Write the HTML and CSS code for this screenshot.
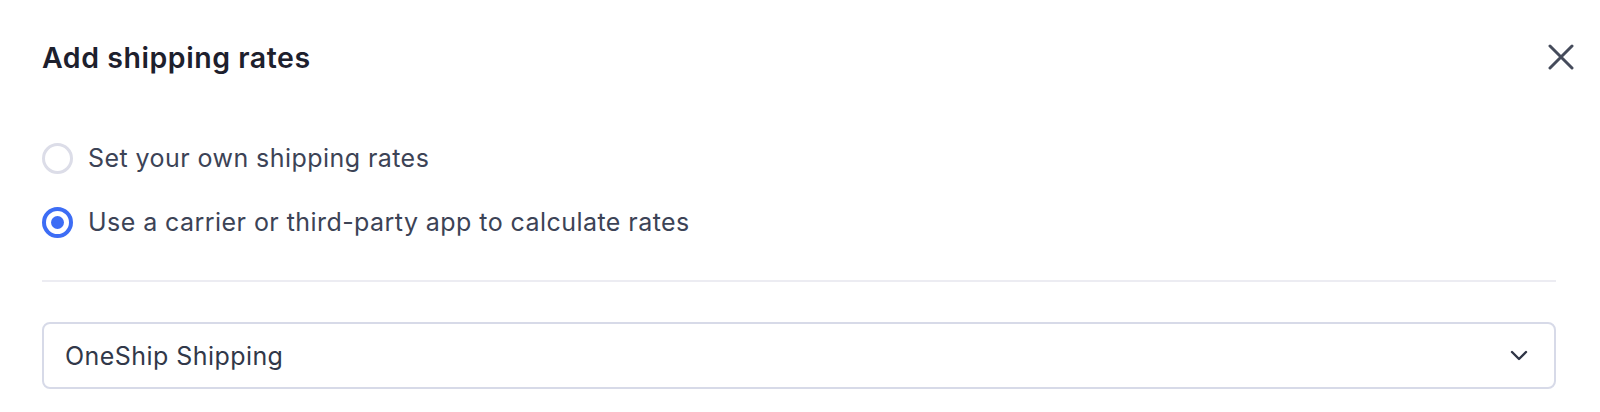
FILE: index.html
```html
<!DOCTYPE html>
<html lang="en">
<head>
<meta charset="utf-8">
<title>Add shipping rates</title>
<link rel="stylesheet" href="styles.css">
</head>
<body>
<div class="modal">
  <div class="modal-header">
    <h2 class="modal-title">Add shipping rates</h2>
    <button class="close-btn" aria-label="Close">
      <svg width="26" height="26" viewBox="0 0 26 26"><path d="M2 2 L24 24 M24 2 L2 24" stroke="#454b5b" stroke-width="3" stroke-linecap="round" fill="none"/></svg>
    </button>
  </div>
  <div class="radio-group">
    <label class="radio-row">
      <span class="radio"></span>
      <span class="radio-label">Set your own shipping rates</span>
    </label>
    <label class="radio-row">
      <span class="radio checked"></span>
      <span class="radio-label">Use a carrier or third-party app to calculate rates</span>
    </label>
  </div>
  <div class="divider"></div>
  <div class="select">
    <span class="select-value">OneShip Shipping</span>
    <svg class="chevron" width="18" height="11" viewBox="0 0 18 11"><path d="M2 2 L9 9 L16 2" stroke="#2f3546" stroke-width="2.4" stroke-linecap="round" stroke-linejoin="round" fill="none"/></svg>
  </div>
</div>
</body>
</html>
```

FILE: styles.css
```css
* { box-sizing: border-box; }
html, body { margin: 0; padding: 0; background: #ffffff; }
body { font-family: Inter, "Noto Sans", "Liberation Sans", sans-serif; }

.modal {
  width: 1600px;
  height: 412px;
  padding: 40px 44px 0 42px;
  background: #ffffff;
}

.modal-header {
  display: flex;
  align-items: center;
  justify-content: space-between;
  height: 34px;
}

.modal-title {
  margin: 0;
  font-size: 28.5px;
  font-weight: 600;
  color: #1d202d;
  letter-spacing: 0.55px;
}

.close-btn {
  border: 0;
  background: none;
  padding: 0;
  margin-right: -18px;
  width: 26px;
  height: 26px;
  display: flex;
  align-items: center;
  justify-content: center;
  cursor: pointer;
}

.radio-group {
  display: flex;
  flex-direction: column;
  gap: 32px;
  margin-top: 68px;
}

.radio-row {
  display: flex;
  align-items: center;
  gap: 15px;
  height: 32px;
}

.radio {
  width: 31px;
  height: 31px;
  border-radius: 50%;
  border: 3px solid #dcdde8;
  background: #fff;
  flex: none;
}

.radio.checked {
  border: 4px solid #3d6df5;
  position: relative;
}

.radio.checked::after {
  content: "";
  position: absolute;
  left: 50%;
  top: 50%;
  width: 13px;
  height: 13px;
  margin: -6.5px 0 0 -6.5px;
  border-radius: 50%;
  background: #3d6df5;
}

.radio-label {
  font-size: 25px;
  letter-spacing: 0.44px;
  color: #3c4356;
}

.divider {
  height: 2px;
  background: #ececf2;
  margin-top: 42px;
}

.select {
  margin-top: 40px;
  height: 67px;
  border: 2px solid #d7dae8;
  border-radius: 8px;
  display: flex;
  align-items: center;
  justify-content: space-between;
  padding: 0 26px 0 21px;
}

.select-value {
  font-size: 25px;
  letter-spacing: 0.44px;
  color: #313849;
}

.chevron { flex: none; }
```
